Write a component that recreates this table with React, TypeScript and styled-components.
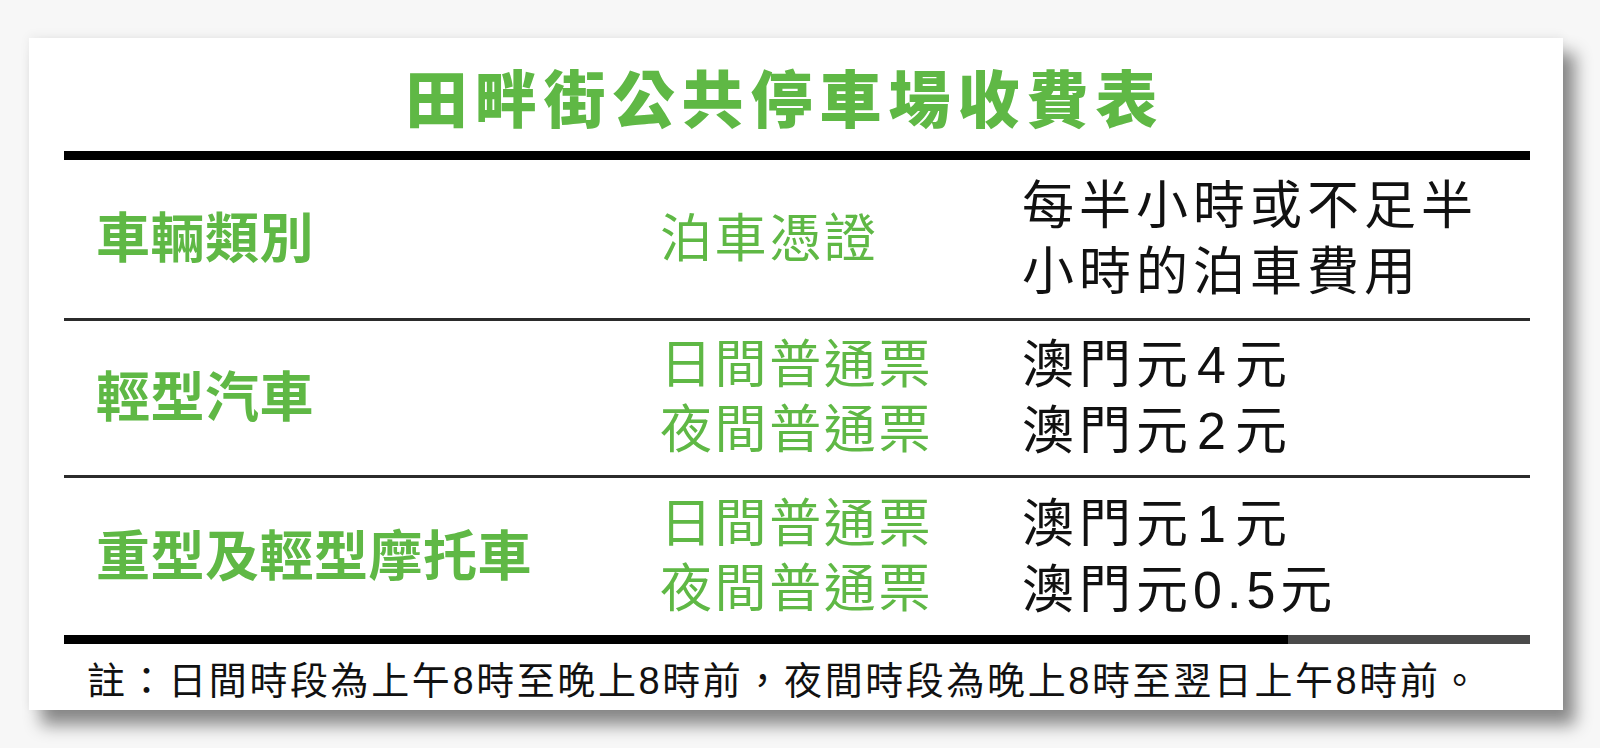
import React from 'react';
import styled, { createGlobalStyle } from 'styled-components';

const GREEN = '#5fb845';
const FONT = '"Liberation Sans", "Noto Sans CJK TC", sans-serif';

const GlobalStyle = createGlobalStyle`
  html, body {
    margin: 0;
    padding: 0;
    background: #f7f7f7;
  }
  body {
    font-family: ${FONT};
    width: 1600px;
    height: 748px;
    overflow: hidden;
  }
`;

const Page = styled.div`
  padding: 38px 0 0 29px;
`;

const Card = styled.div`
  width: 1534px;
  height: 672px;
  box-sizing: border-box;
  padding: 0 33px 0 35px;
  background: #fff;
  box-shadow: 12px 15px 16px rgba(0, 0, 0, 0.45), 0 -2px 10px rgba(0, 0, 0, 0.06);
  display: flex;
  flex-direction: column;
`;

const Title = styled.h1`
  margin: 0;
  height: 113px;
  box-sizing: border-box;
  padding: 14px 24px 0 0;
  display: flex;
  align-items: center;
  justify-content: center;
  color: ${GREEN};
  font-family: ${FONT};
  font-size: 62px;
  font-weight: 900;
  letter-spacing: 7px;
  line-height: 1;
`;

const Rule = styled.div<{ $thick?: boolean; $tail?: boolean }>`
  height: ${(p) => (p.$thick ? '9px' : '3px')};
  flex: none;
  background: ${(p) =>
    p.$tail ? 'linear-gradient(90deg, #000 0, #000 1224px, #4a4a4a 1224px)' : p.$thick ? '#000' : '#2b2b2b'};
`;

const Row = styled.div<{ $h: number }>`
  height: ${(p) => p.$h}px;
  display: grid;
  grid-template-columns: 596px 362px 1fr;
  align-items: center;
`;

const Category = styled.div`
  padding-left: 32px;
  color: ${GREEN};
  font-size: 54px;
  font-weight: 700;
  letter-spacing: 0.5px;
  line-height: 1;
`;

const Ticket = styled.div`
  color: ${GREEN};
  font-size: 52px;
  font-weight: 400;
  letter-spacing: 2.6px;
  line-height: 65px;
  white-space: nowrap;
`;

const Fee = styled.div`
  color: #111;
  font-size: 52px;
  font-weight: 400;
  letter-spacing: 5px;
  line-height: 66px;
  white-space: nowrap;
`;

const Digit = styled.span`
  margin: 0 4px;
`;

const Note = styled.div`
  flex: 1;
  display: flex;
  align-items: center;
  padding: 0 0 0 23px;
  color: #111;
  font-size: 38px;
  letter-spacing: 2.6px;
  white-space: nowrap;
`;

const rows = [
  {
    category: '輕型汽車',
    tickets: ['日間普通票', '夜間普通票'],
    fees: ['4', '2'],
    h: 154
  },
  {
    category: '重型及輕型摩托車',
    tickets: ['日間普通票', '夜間普通票'],
    fees: ['1', '0.5'],
    h: 157
  }
];

const App: React.FC = () => {
  return (
    <>
      <GlobalStyle />
      <Page>
        <Card>
          <Title>田畔街公共停車場收費表</Title>
          <Rule $thick />

          {/* Header */}
          <Row $h={158}>
            <Category>車輛類別</Category>
            <Ticket>泊車憑證</Ticket>
            <Fee>
              每半小時或不足半
              <br />
              小時的泊車費用
            </Fee>
          </Row>

          {rows.map((row) => (
            <React.Fragment key={row.category}>
              <Rule />
              <Row $h={row.h}>
                <Category>{row.category}</Category>
                <Ticket>
                  {row.tickets.map((t) => (
                    <div key={t}>{t}</div>
                  ))}
                </Ticket>
                <Fee>
                  {row.fees.map((f) => (
                    <div key={f}>
                      澳門元{f.length > 1 ? f : <Digit>{f}</Digit>}元
                    </div>
                  ))}
                </Fee>
              </Row>
            </React.Fragment>
          ))}

          <Rule $thick $tail />
          <Note>註：日間時段為上午8時至晚上8時前，夜間時段為晚上8時至翌日上午8時前。</Note>
        </Card>
      </Page>
    </>
  );
};

export default App;
